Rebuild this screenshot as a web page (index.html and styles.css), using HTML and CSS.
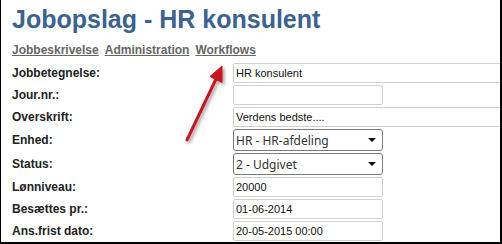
FILE: index.html
```html
<!DOCTYPE html>
<html lang="da">
<head>
    <meta charset="UTF-8">
    <meta name="viewport" content="width=device-width, initial-scale=1.0">
    <title>Jobopslag - HR konsulent</title>
    <link rel="stylesheet" href="styles.css">
</head>
<body>
    <div class="frame">
        <h1 class="title">Jobopslag - HR konsulent</h1>
        <div class="tabs">
            <a href="#">Jobbeskrivelse</a>
            <a href="#">Administration</a>
            <a href="#">Workflows</a>
        </div>
        <div class="form">
            <label>Jobbetegnelse:</label>
            <input class="field wide" type="text" value="HR konsulent">

            <label>Jour.nr.:</label>
            <input class="field" type="text" value="">

            <label>Overskrift:</label>
            <input class="field wide" type="text" value="Verdens bedste....">

            <label>Enhed:</label>
            <span class="pick"><select><option>HR - HR-afdeling</option></select></span>

            <label>Status:</label>
            <span class="pick"><select><option>2 - Udgivet</option></select></span>

            <label>Lønniveau:</label>
            <input class="field" type="text" value="20000">

            <label>Besættes pr.:</label>
            <input class="field" type="text" value="01-06-2014">

            <label>Ans.frist dato:</label>
            <input class="field" type="text" value="20-05-2015 00:00">
        </div>

        <!-- pointer arrow drawn over the page -->
        <svg class="arrow" width="502" height="244" viewBox="0 0 502 244">
            <defs>
                <filter id="shade" x="-50%" y="-50%" width="200%" height="200%">
                    <feDropShadow dx="2" dy="2" stdDeviation="1.5" flood-color="#000" flood-opacity="0.35"/>
                </filter>
            </defs>
            <g filter="url(#shade)" fill="#c8141c" stroke="#c8141c">
                <line x1="186" y1="140" x2="215" y2="79" stroke-width="3" stroke-linecap="round"/>
                <polygon points="221,66 221,82.5 209,76.5" stroke-width="1" stroke-linejoin="round"/>
            </g>
        </svg>
    </div>
</body>
</html>
```

FILE: styles.css
```css
body {
    margin: 0;
    background: #fff;
    font-family: "Liberation Sans", Arial, sans-serif;
}
.frame {
    position: relative;
    width: 502px;
    height: 244px;
    box-sizing: border-box;
    border-left: 1px solid #000;
    border-right: 2px solid #000;
    border-bottom: 2px solid #000;
    padding-left: 11px;
    overflow: hidden;
}
.title {
    margin: 0;
    padding-top: 5px;
    font-size: 25px;
    line-height: 28px;
    font-weight: bold;
    color: #3a6391;
}
.tabs {
    display: flex;
    gap: 6px;
    margin-top: 10px;
    font-size: 12px;
    line-height: 15px;
    font-weight: bold;
}
.tabs a {
    color: #666;
    text-decoration: underline;
}
.form {
    display: grid;
    grid-template-columns: 221px auto;
    row-gap: 2px;
    margin-top: 5px;
}
.form label {
    align-self: center;
    font-size: 12px;
    font-weight: bold;
    color: #222;
}
.field {
    box-sizing: border-box;
    width: 150px;
    height: 20px;
    margin: 0;
    padding: 0 2px;
    border: 1px solid #cfcfcf;
    border-radius: 2px;
    font-family: "Liberation Sans", Arial, sans-serif;
    font-size: 11px;
    color: #111;
    background: #fff;
}
.field.wide {
    width: 320px;
}
.pick {
    position: relative;
    width: 150px;
    height: 22px;
}
.pick select {
    appearance: none;
    -webkit-appearance: none;
    box-sizing: border-box;
    width: 150px;
    height: 22px;
    margin: 0;
    padding: 0 0 0 2px;
    border: 1px solid #7a7a7a;
    border-radius: 3px;
    background: #fff;
    font-family: "Noto Sans", sans-serif;
    font-size: 12px;
    color: #333;
}
.pick::after {
    content: '';
    position: absolute;
    right: 7px;
    top: 9px;
    border-left: 4px solid transparent;
    border-right: 4px solid transparent;
    border-top: 4px solid #111;
    pointer-events: none;
}
.arrow {
    position: absolute;
    left: 0;
    top: 0;
    pointer-events: none;
}
```
